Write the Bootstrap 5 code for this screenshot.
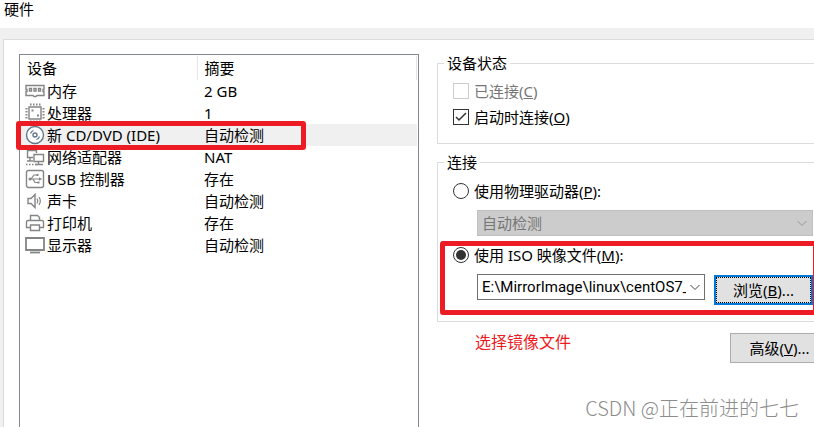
<!DOCTYPE html>
<html lang="zh-CN">
<head>
<meta charset="utf-8">
<meta name="viewport" content="width=device-width, initial-scale=1">
<title>硬件</title>
<link href="https://cdn.jsdelivr.net/npm/bootstrap@5.3.0/dist/css/bootstrap.min.css" rel="stylesheet">
<style>
body { font: 15px/22px "Noto Sans", "Noto Sans CJK SC", sans-serif; color: #000; background: #f0f0f0; overflow: hidden; }
.title-bar { height: 28px; line-height: 19px; padding-left: 4px; }
.pane { margin: 11px 0 0 3px; border: solid #dcdcdc; border-width: 1px 0 0 1px; padding-left: 15px; }
.device-list { flex: 0 0 400px; margin-top: 14px; border: solid #828790; border-width: 1px 1px 0; padding: 1px; }
.device-table { width: 100%; table-layout: fixed; }
.device-table th { height: 24px; font-weight: 400; padding: 0 0 0 7px; border-right: 1px solid #e5e5e5; }
.device-table th:first-child { padding-left: 6px; }
.device-table td { height: 22px; padding: 0 0 0 7px; white-space: nowrap; }
.device-table .name-col { width: 176px; }
.device-table td:first-child { padding-left: 4px; }
.device-table .picked { background: #f0f0f0; }
.device-table svg { width: 20px; height: 20px; margin-right: 2px; flex: none; fill: none; stroke: #858585; stroke-width: 1.4; }
.device-table .picked svg { stroke: #60798c; }
.red-frame { border: 5px solid #ed1c24; border-radius: 3px; pointer-events: none; z-index: 2; }
.frame-device { left: -9px; top: -3px; width: 290px; height: 29px; }
.settings { flex: 1 1 0; min-width: 0; margin-left: 18px; padding-top: 12px; }
.group { border: solid #dcdcdc; border-width: 1px 0 1px 1px; padding: 0 1px 13px 15px; margin-bottom: 7px; }
.group legend { font-size: 15px; line-height: 22px; padding: 0 3px; margin-left: -9px; margin-bottom: 0; }
.group-connect { padding-bottom: 16px; margin-bottom: 9px; }
.choice { min-height: 26px; padding: 0; margin: 0; display: flex; align-items: center; }
.choice .form-check-input { float: none; width: 16px; height: 16px; margin: 0 5px 0 0; border: 1px solid #333; box-shadow: none; flex: none; background-color: #fff; }
.choice .form-check-input[type=checkbox] { border-radius: 0; }
.choice .form-check-input:disabled { border-color: #ccc; opacity: 1; }
.choice .form-check-input[type=checkbox]:checked { background-size: 14px; background-image: url("data:image/svg+xml,%3Csvg xmlns='http://www.w3.org/2000/svg' viewBox='0 0 14 14'%3E%3Cpath d='M2 7l3 3 7-7' fill='none' stroke='%23333' stroke-width='1.5'/%3E%3C/svg%3E"); }
.choice .form-check-input[type=radio]:checked { background-size: 14px; background-image: url("data:image/svg+xml,%3Csvg xmlns='http://www.w3.org/2000/svg' viewBox='0 0 14 14'%3E%3Ccircle cx='7' cy='7' r='5' fill='%23333'/%3E%3C/svg%3E"); }
.choice .form-check-input:disabled ~ .form-check-label { color: #767676; opacity: 1; }
.choice-first { margin-top: 4px; }
.group-connect .choice-first { margin-top: 5px; }
.drive-select { margin: 6px 0 0 24px; width: calc(100% - 24px); height: 26px; padding: 0 24px 0 4px; border: 1px solid #bfbfbf; border-radius: 0; font-size: 15px; line-height: 24px; background-position: right 4px center; background-size: 12px;
  background-image: url("data:image/svg+xml,%3Csvg xmlns='http://www.w3.org/2000/svg' viewBox='0 0 12 12'%3E%3Cpath d='M1.5 4L6 8.5 10.5 4' fill='none' stroke='%23999'/%3E%3C/svg%3E"); }
.drive-select:disabled { background-color: #ccc; color: #767676; opacity: 1; }
.iso-block { margin-top: 6px; }
.frame-iso { left: -13px; right: -5px; top: -1px; height: 74px; }
.iso-row { margin: 6px 0 0 24px; gap: 9px; }
.combo { flex: 1 1 0; min-width: 0; height: 26px; border: 1px solid #707070; background: #fff; }
.combo input { flex: 1 1 0; min-width: 0; border: 0; padding: 0 0 0 4px; font: 15px Roboto, "Noto Sans CJK SC", sans-serif; color: #000; outline: 0; }
.combo button { width: 18px; border: 0; padding: 0; background: #fff; line-height: 0; }
.combo svg { width: 12px; height: 12px; fill: none; stroke: #444; }
.push-btn { border: 1px solid #adadad; border-radius: 0; background: #e1e1e1; color: #000; font-size: 15px; line-height: 22px; padding: 0; height: 30px; white-space: nowrap; }
.browse-btn { width: 99px; margin-top: 1px; border: 2px solid #0078d7; outline: 1px dotted #000; outline-offset: -3px; }
.hint { color: #ed1c24; font-size: 16px; margin-left: 38px; }
.advanced-btn { width: 99px; margin: 2px -15px 0 0; }
.watermark { font: 300 20px/24px "Noto Sans CJK SC", sans-serif; color: #8c8c8c; margin: 0 15px 7px 0; }
</style>
</head>
<body class="vh-100 d-flex flex-column">
<header class="title-bar bg-white">硬件</header>
<main class="pane bg-white flex-grow-1 d-flex">
  <section class="device-list">
    <table class="device-table">
      <colgroup><col class="name-col"><col></colgroup>
      <thead><tr><th scope="col">设备</th><th scope="col">摘要</th></tr></thead>
      <tbody>
        <tr><td><div class="d-flex align-items-center"><svg viewBox="0 0 20 20"><path d="M1 4.500h18v4h-1v2h1v4h-7l-1 1h-2l-1-1H1v-4h1v-2H1z"/><path d="M4.500 7.500h2v2.500h-2zM9 7.500h2v2.500H9zM13.500 7.500h2v2.500h-2z"/></svg>内存</div></td><td>2 GB</td></tr>
        <tr><td><div class="d-flex align-items-center"><svg viewBox="0 0 20 20"><path d="M4 4h12v12H4z"/><path d="M5 1.500h11M5 18.500h11M1.500 5v11M18.500 5v11" stroke-width="2" stroke-dasharray="1.500 1.500"/><path d="M6.500 7.500h2M12 12.500h2" stroke-width="2"/></svg>处理器</div></td><td>1</td></tr>
        <tr class="picked"><td><div class="d-flex align-items-center position-relative"><svg viewBox="0 0 20 20"><circle cx="10" cy="10" r="8.500" fill="#fff"/><circle cx="10" cy="10" r="2"/><path d="M5.500 8.500a5 5 0 0 1 3-3M14.500 11.500a5 5 0 0 1-3 3" stroke-width="1.200"/></svg>新 CD/DVD (IDE)<span class="red-frame frame-device position-absolute"></span></div></td><td>自动检测</td></tr>
        <tr><td><div class="d-flex align-items-center"><svg viewBox="0 0 20 20"><path d="M8 10.500H2.500v-7h9V6M5 10.500v3M2 14h6"/><path d="M9 7.500h9.500v7H9zM13.500 14.500v2.500M10 17.500h8"/><path d="M1 17.500h11" stroke-dasharray="1.500 1.500"/></svg>网络适配器</div></td><td>NAT</td></tr>
        <tr><td><div class="d-flex align-items-center"><svg viewBox="0 0 20 20"><rect x="1.500" y="1.500" width="17" height="17" rx="2"/><path d="M4 10h11M6 10l3-4h3M8 10l2 3.500h3" stroke-width="1.200"/><path d="M14 8.300l3 1.700-3 1.700zM11.500 5h2v2h-2zM12.500 12.500h2v2h-2z" fill="#858585" stroke="none"/><circle cx="5" cy="10" r="1.500" fill="#858585" stroke="none"/></svg>USB 控制器</div></td><td>存在</td></tr>
        <tr><td><div class="d-flex align-items-center"><svg viewBox="0 0 20 20"><path d="M3 7.500h3l4-4v13l-4-4H3z"/><path d="M12 7.500q1.600 2.500 0 5M14 6q2.600 4 0 8" stroke-width="1.200"/></svg>声卡</div></td><td>自动检测</td></tr>
        <tr><td><div class="d-flex align-items-center"><svg viewBox="0 0 20 20"><path d="M5.500 7V2.500h7l2 2V7M5 14.500H1.500V9q0-1.500 1.500-1.500h14q1.500 0 1.500 1.500v5.500H15"/><path d="M5.500 12h9v5.500h-9z"/></svg>打印机</div></td><td>存在</td></tr>
        <tr><td><div class="d-flex align-items-center"><svg viewBox="0 0 20 20"><path d="M1 3h18v12H1z" stroke-width="1.800"/><path d="M5 17.500h10" stroke-width="1.800"/></svg>显示器</div></td><td>自动检测</td></tr>
      </tbody>
    </table>
  </section>
  <form class="settings d-flex flex-column">
    <fieldset class="group">
      <legend class="float-none w-auto">设备状态</legend>
      <div class="form-check choice choice-first"><input class="form-check-input" type="checkbox" id="connected" disabled><label class="form-check-label" for="connected">已连接(<u>C</u>)</label></div>
      <div class="form-check choice"><input class="form-check-input" type="checkbox" id="power-on" checked><label class="form-check-label" for="power-on">启动时连接(<u>O</u>)</label></div>
    </fieldset>
    <fieldset class="group group-connect">
      <legend class="float-none w-auto">连接</legend>
      <div class="form-check choice choice-first"><input class="form-check-input" type="radio" name="source" id="physical"><label class="form-check-label" for="physical">使用物理驱动器(<u>P</u>):</label></div>
      <select class="form-select drive-select" aria-label="物理驱动器" disabled><option>自动检测</option></select>
      <div class="iso-block position-relative">
        <div class="form-check choice"><input class="form-check-input" type="radio" name="source" id="iso" checked><label class="form-check-label" for="iso">使用 ISO 映像文件(<u>M</u>):</label></div>
        <div class="iso-row d-flex">
          <div class="combo d-flex"><input type="text" value="E:\MirrorImage\linux\centOS7_" aria-label="ISO 映像文件"><button type="button" aria-label="展开"><svg viewBox="0 0 12 12"><path d="M1.500 4L6 8.500 10.500 4"/></svg></button></div>
          <button type="button" class="btn push-btn browse-btn">浏览(<u>B</u>)...</button>
        </div>
        <span class="red-frame frame-iso position-absolute"></span>
      </div>
    </fieldset>
    <div class="d-flex justify-content-between align-items-start">
      <span class="hint">选择镜像文件</span>
      <button type="button" class="btn push-btn advanced-btn">高级(<u>V</u>)...</button>
    </div>
    <div class="watermark mt-auto text-end">CSDN @正在前进的七七</div>
  </form>
</main>
<script src="https://cdn.jsdelivr.net/npm/bootstrap@5.3.0/dist/js/bootstrap.bundle.min.js"></script>
</body>
</html>
